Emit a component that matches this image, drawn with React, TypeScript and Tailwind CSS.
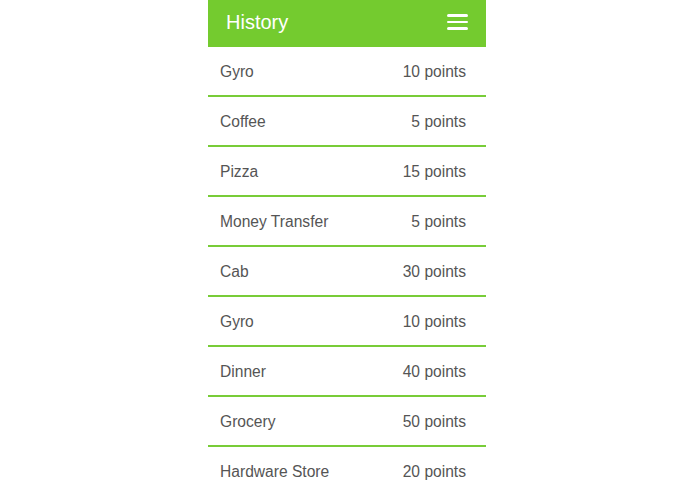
const items: { name: string; points: number }[] = [
  { name: "Gyro", points: 10 },
  { name: "Coffee", points: 5 },
  { name: "Pizza", points: 15 },
  { name: "Money Transfer", points: 5 },
  { name: "Cab", points: 30 },
  { name: "Gyro", points: 10 },
  { name: "Dinner", points: 40 },
  { name: "Grocery", points: 50 },
  { name: "Hardware Store", points: 20 },
];

export default function App() {
  return (
    <div className="h-[494px] w-full bg-white flex justify-center overflow-hidden font-['Liberation_Sans',Arial,sans-serif]">
      <div className="w-[278px] mr-[1px]">
        <header className="h-[47px] bg-[#74cb2f] flex items-center justify-between pl-[18px] pr-[18px] pb-[3px]">
          <h1 className="text-white text-[20px] leading-none">History</h1>
          <button className="flex flex-col gap-[4px] w-[21px]">
            <span className="h-[2.5px] bg-white rounded-full" />
            <span className="h-[2.5px] bg-white rounded-full" />
            <span className="h-[2.5px] bg-white rounded-full" />
          </button>
        </header>
        <ul>
          {items.map((item, i) => (
            <li
              key={i}
              className="h-[50px] border-b-2 border-[#78cc38] flex items-center justify-between pl-[12px] pr-[20px] pt-[2px] text-[15.6px] text-[#555555]"
            >
              <span>{item.name}</span>
              <span>{item.points} points</span>
            </li>
          ))}
        </ul>
      </div>
    </div>
  );
}
